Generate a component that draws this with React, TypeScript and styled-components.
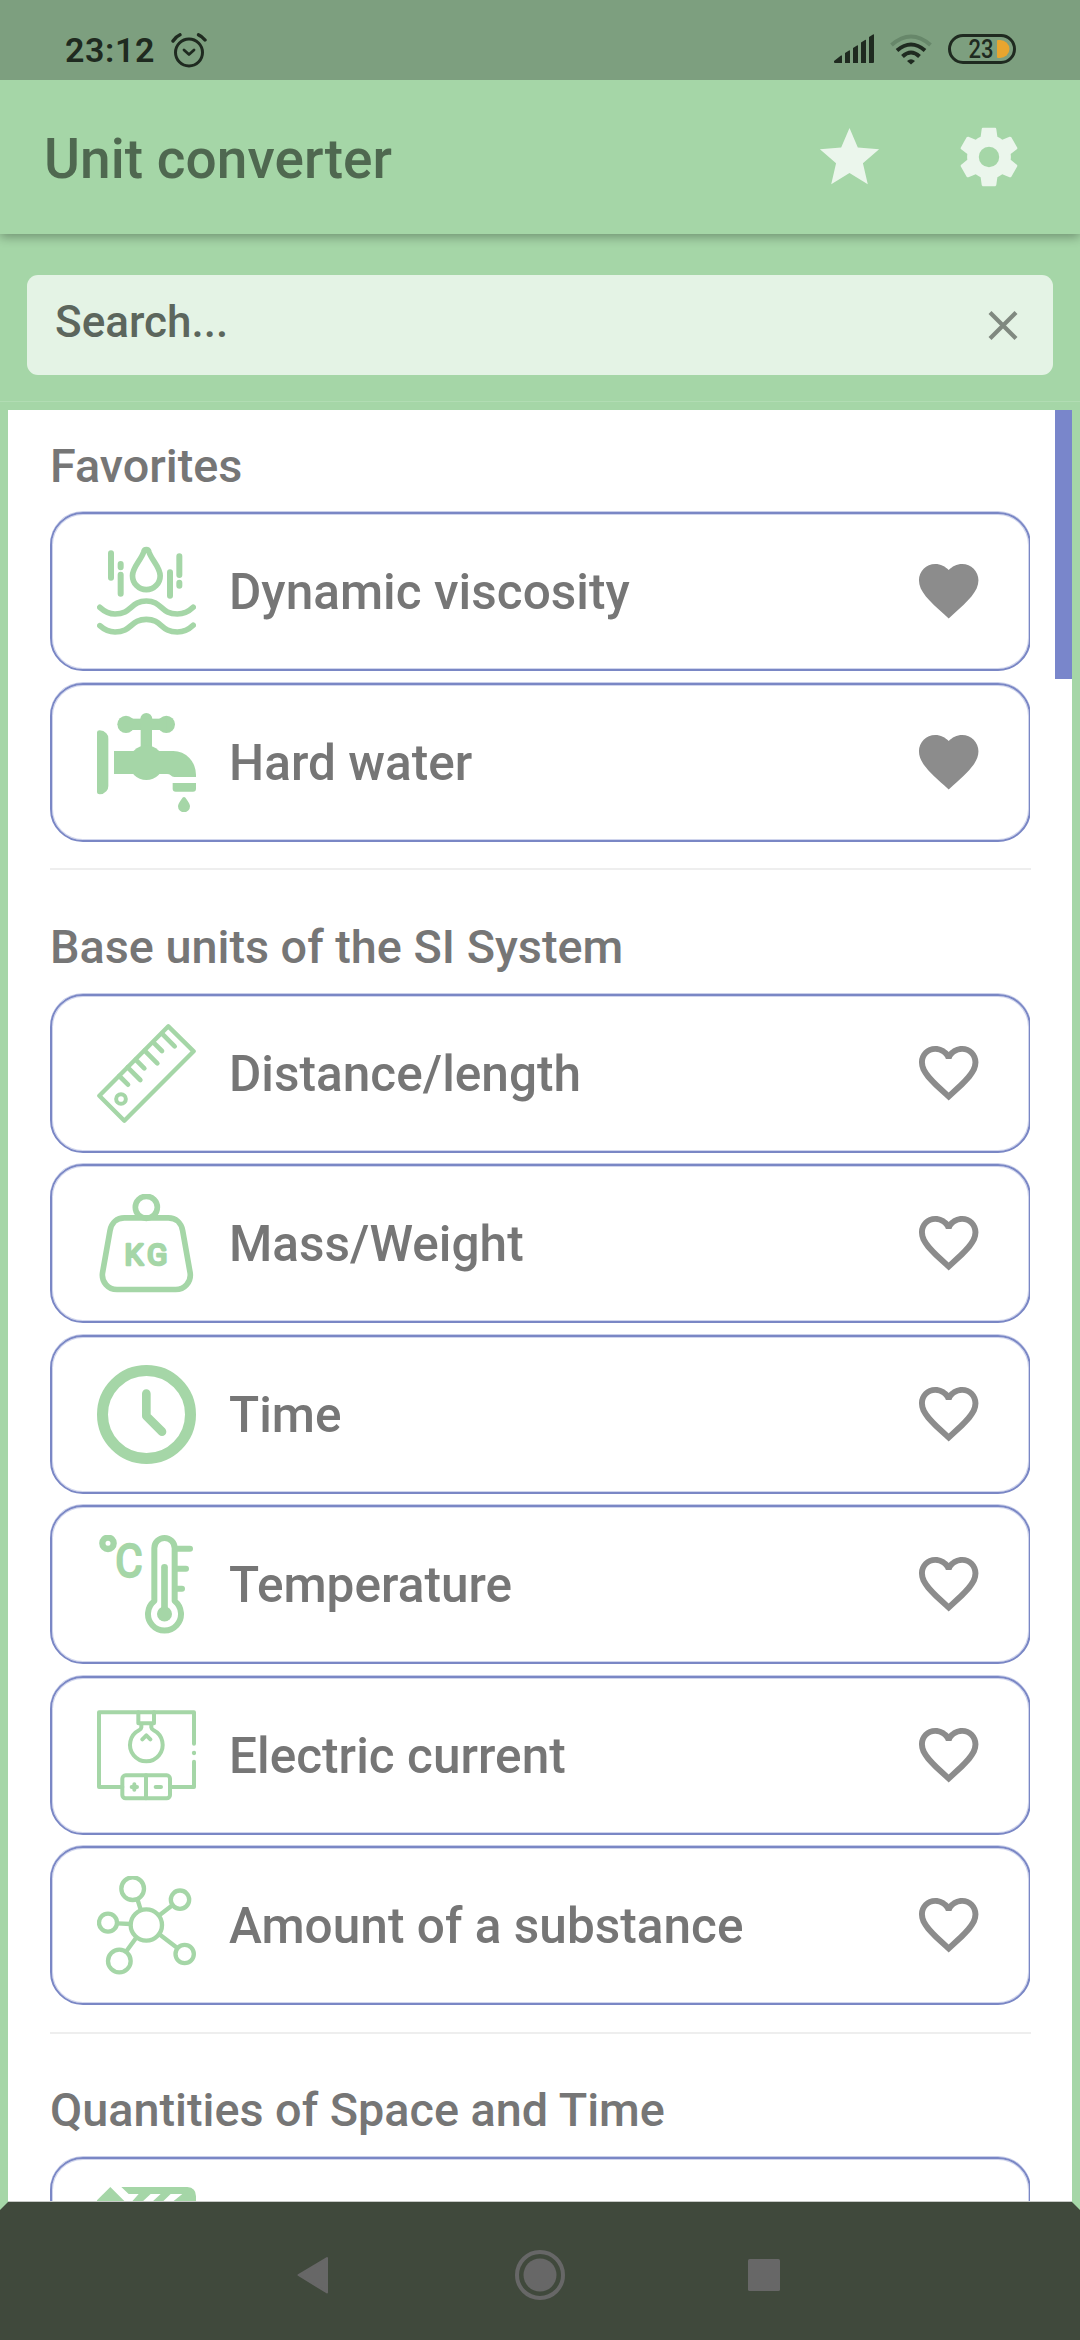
import React from 'react';
import styled, { createGlobalStyle } from 'styled-components';

const green = '#a5d6a7';
const indigo = '#7986cb';
const navColor = '#40493c';
const ink = '#1f2a20';

const GlobalStyle = createGlobalStyle`
  * { box-sizing: border-box; }
  html, body { margin: 0; padding: 0; background: ${green}; }
  body { font-family: Roboto, "Noto Sans", sans-serif; font-weight: 500; overflow: hidden; }
  svg { display: block; flex: none; }
`;

const Screen = styled.div`
  width: 1080px;
  height: 2340px;
  display: flex;
  flex-direction: column;
  background: ${green};
  overflow: hidden;
`;

const StatusBar = styled.header`
  position: relative;
  z-index: 1;
  height: 80px;
  flex: none;
  display: flex;
  align-items: flex-start;
  justify-content: space-between;
  padding: 30px 64px 0 65px;
  background: #7d9f7f;
  color: ${ink};
`;

const StatusGroup = styled.div<{ $height: number }>`
  display: flex;
  align-items: center;
  gap: 16px;
  height: ${(p) => p.$height}px;
`;

const ClockText = styled.span`
  font-size: 34px;
  line-height: 40px;
  font-weight: 600;
  letter-spacing: 0.6px;
`;

const AppBar = styled.div`
  position: relative;
  height: 154px;
  flex: none;
  display: flex;
  align-items: center;
  justify-content: space-between;
  padding: 0 56px 0 44px;
  background: ${green};
  box-shadow: 0 3px 10px rgba(0, 0, 0, 0.32);
`;

const Title = styled.h1`
  margin: 0;
  padding-top: 4px;
  font-size: 55px;
  line-height: 66px;
  font-weight: 500;
  letter-spacing: 0.04px;
  color: #4f6850;
`;

const Actions = styled.div`
  display: flex;
  gap: 69.5px;
  color: #ebf6ec;
`;

const SearchArea = styled.div`
  height: 168px;
  flex: none;
  padding: 41px 27px 0;
  border-bottom: 1px solid #b1dcb3;
`;

const SearchBox = styled.div`
  height: 99.5px;
  display: flex;
  align-items: center;
  justify-content: space-between;
  padding: 0 34px 0 28px;
  border-radius: 11px;
  background: #e4f3e5;
  color: #5c665d;
`;

const SearchText = styled.span`
  padding-bottom: 6px;
  font-size: 44px;
  line-height: 52px;
`;

const Frame = styled.main`
  flex: 1;
  min-height: 0;
  display: flex;
  border: 8px solid ${green};
  border-bottom-color: ${navColor};
`;

const Viewport = styled.div`
  flex: 1;
  display: flex;
  justify-content: space-between;
  background: #fff;
  border-bottom: 1px solid #c7c9c6;
  overflow: hidden;
`;

const List = styled.div`
  width: 1023px;
  padding-left: 42px;
`;

const ScrollTrack = styled.div`
  width: 17px;
`;

const ScrollThumb = styled.div`
  height: 269px;
  background: ${indigo};
`;

const SectionBlock = styled.section<{ $first?: boolean }>`
  padding-top: ${(p) => (p.$first ? 29.7 : 50.7)}px;
`;

const SectionTitle = styled.h2`
  margin: 0 0 20.7px;
  font-size: 46.75px;
  line-height: 52px;
  font-weight: 500;
  color: #767676;
`;

const Cards = styled.div`
  width: 980px;
  display: flex;
  flex-direction: column;
  gap: 11.5px;
  overflow: hidden;
  margin-top: -2px;
  padding-top: 2px;
`;

const Card = styled.div`
  width: 981px;
  height: 159px;
  flex: none;
  display: flex;
  align-items: center;
  padding: 0 45px;
  border: 2px solid #7a87c5;
  border-radius: 33px;
  box-shadow: inset 0 0 0 1px rgba(121, 134, 203, 0.35), 0 -1px 0 0 rgba(121, 134, 203, 0.4);
  color: #767676;
`;

const CardLabel = styled.span`
  flex: 1;
  padding: 1px 0 0 33px;
  font-size: 49.5px;
  line-height: 58px;
  letter-spacing: 0.04px;
  white-space: nowrap;
`;

const HeartSlot = styled.span`
  display: flex;
  margin-top: -2px;
  color: #8c8c8c;
`;

const Divider = styled.hr`
  width: 981px;
  height: 2px;
  margin: 26.5px 0 0;
  border: 0;
  background: #eeeeee;
`;

const NavBar = styled.nav`
  height: 130px;
  flex: none;
  display: grid;
  grid-template-columns: 31px 50px 32px;
  column-gap: 187px;
  align-items: center;
  padding-left: 297px;
  background: ${navColor};
  color: #676767;

  svg:nth-child(2) {
    justify-self: center;
  }
  svg:nth-child(3) {
    margin-left: -4px;
  }
`;

/* ---------- category icons, drawn on a 297 unit square ---------- */

const IconSvg = ({ children }: { children: React.ReactNode }) => (
  <svg
    width="99"
    height="99"
    viewBox="0 0 297 297"
    fill="none"
    stroke={green}
    strokeLinecap="round"
    strokeLinejoin="round"
  >
    {children}
  </svg>
);

const Viscosity = () => (
  <IconSvg>
    <g strokeWidth="18">
      <path d="M42 34V107M71 66V76M71 98V155M219 91V161M247 43V99M247 122V131" />
    </g>
    <g strokeWidth="17">
      <path d="M148 23Q142 23 140 30C132 55 106.500 75 106.500 101A41.500 42 0 0 0 189.500 101C189.500 75 164 55 156 30Q154 23 148 23Z" />
      <path d="M8.500 196C24 210 38 216 54 216C105 216 100 177 148 177C196 177 190 216 241 216C260 216 275 209 288.500 196" />
      <path d="M8.500 251C24 265 38 270 54 270C105 270 100 232 148 232C196 232 190 270 241 270C260 270 275 263 288.500 250" />
    </g>
  </IconSvg>
);

const Faucet = () => (
  <IconSvg>
    <g fill={green} stroke="none">
      <path d="M0 58Q0 52 8 52Q20 52 28 61Q34 67 34 77V219Q34 229 28 235Q20 244 8 244Q0 244 0 238Z" />
      <circle cx="87" cy="34" r="26" />
      <circle cx="208" cy="34" r="26" />
      <circle cx="148" cy="18" r="18" />
      <rect x="87" y="17" width="121" height="34" />
      <rect x="131" y="30" width="34" height="90" />
      <circle cx="148" cy="149" r="52" />
      <path d="M51 114H229A68 72 0 0 1 297 186V192H232Q225 192 221 187Q217 183 210 183H51Z" />
      <path d="M227 210H297V227Q297 236 288 236H236Q227 236 227 227Z" />
      <path d="M261 252Q265 252 268 258Q279 273 279 280A18 18 0 0 1 243 280Q243 273 254 258Q257 252 261 252Z" />
    </g>
  </IconSvg>
);

const Ruler = () => (
  <IconSvg>
    <path strokeWidth="13" strokeLinejoin="round" d="M214 7L290 82L82 290L7 215Z" />
    <path
      strokeWidth="14"
      d="M67 156L93 182M92 130L130 168M116 107L142 133M143 80L181 118M169 55L195 81M195 29L233 67"
    />
    <circle cx="72" cy="225" r="14.500" strokeWidth="12" />
  </IconSvg>
);

const Weight = () => (
  <IconSvg>
    <circle cx="148" cy="40" r="33" strokeWidth="17" />
    <path
      strokeWidth="17"
      d="M82 71.500H214C236 71.500 253 86 257 110L279.500 237C283 264 263 286.500 236 286.500H60C33 286.500 13 264 16.500 237L39 110C43 86 60 71.500 82 71.500Z"
    />
    <text x="82.500 150" y="212" fontSize="90" fontWeight="400" fill={green} strokeWidth="8">
      KG
    </text>
  </IconSvg>
);

const Time = () => (
  <IconSvg>
    <circle cx="148.500" cy="148.500" r="132" strokeWidth="33" />
    <path strokeWidth="26" d="M148 86V153L195 200" />
  </IconSvg>
);

const Temperature = () => (
  <IconSvg>
    <circle cx="33" cy="25" r="17" strokeWidth="19" />
    <text
      x="55"
      y="127"
      fontSize="139"
      fontWeight="400"
      fill={green}
      strokeWidth="7"
      textLength="82"
      lengthAdjust="spacingAndGlyphs"
    >
      C
    </text>
    <path strokeWidth="18" d="M172 39.500A30.500 30.500 0 0 1 233 39.500V198A49.500 49.500 0 1 1 172 198Z" />
    <path strokeWidth="20" d="M202.500 97V237" />
    <circle cx="202.500" cy="237" r="22.500" fill={green} stroke="none" />
    <path strokeWidth="18" d="M234 41H279M234 101H267M234 161H255" />
  </IconSvg>
);

const Current = () => (
  <IconSvg>
    <g strokeWidth="12">
      <path d="M76 243H6V19H291V113M291 167V243H225" />
      <rect x="76" y="208" width="143" height="69" rx="10" />
      <path d="M147 208V277M124 19V52H171V19" />
      <path d="M133 54V64Q132 70 126 73A49 49 0 1 0 170 73Q164 70 163 64V54" />
      <path d="M136 100L148 88L160 100M104 243H120M112 235V251M176 243H192" />
    </g>
    <circle cx="291" cy="141" r="6.500" fill={green} stroke="none" />
  </IconSvg>
);

const Substance = () => (
  <IconSvg>
    <g strokeWidth="13">
      <circle cx="148" cy="147" r="47" />
      <circle cx="107" cy="38" r="34" />
      <circle cx="249" cy="71" r="27.500" />
      <circle cx="33" cy="140" r="27" />
      <circle cx="67" cy="255" r="34" />
      <circle cx="263" cy="234" r="27.500" />
      <path d="M122 72L131 101M226 88L188 117M61 142L100 144M88 226L117 186M240 215L187 175" />
    </g>
  </IconSvg>
);

const Area = () => (
  <IconSvg>
    <g fill={green} stroke="none">
      <path d="M40 0L84 44V80H0V40Z" />
      <path d="M73 0H271Q297 2 297 28V46H225L256 21H221L195 46H164L191 21H161L134 46H103L125 21H95Z" />
    </g>
  </IconSvg>
);

/* ---------- interface icons ---------- */

const HEART =
  'M12,21.35L10.55,20.03C5.4,15.36 2,12.27 2,8.5C2,5.41 4.42,3 7.5,3C9.24,3 10.91,3.81 12,5.08C13.09,3.81 14.76,3 16.5,3C19.58,3 22,5.41 22,8.5C22,12.27 18.6,15.36 13.45,20.03L12,21.35Z';
const HEART_HOLE =
  'M12.1,18.55L12,18.65L11.89,18.55C7.14,14.24 4,11.39 4,8.5C4,6.5 5.5,5 7.5,5C9.04,5 10.54,6 11.07,7.36H12.93C13.46,6 14.96,5 16.5,5C18.5,5 20,6.5 20,8.5C20,11.39 16.86,14.24 12.1,18.55Z';

const Heart = ({ filled }: { filled?: boolean }) => (
  <svg width="71.400" height="71.400" viewBox="0 0 24 24" fill="currentColor">
    <path fillRule="evenodd" d={filled ? HEART : HEART + HEART_HOLE} />
  </svg>
);

const Star = () => (
  <svg width="71" height="71" viewBox="0 0 24 24" fill="currentColor">
    <path d="M12 17.270L18.180 21l-1.640-7.030L22 9.240l-7.190-.61L12 2 9.190 8.630 2 9.240l5.460 4.730L5.820 21z" />
  </svg>
);

const Cog = () => (
  <svg width="70" height="70" viewBox="0 0 24 24" fill="currentColor">
    <path d="M12,15.5A3.5,3.5 0 0,1 8.5,12A3.5,3.5 0 0,1 12,8.5A3.5,3.5 0 0,1 15.5,12A3.5,3.5 0 0,1 12,15.5M19.43,12.97C19.47,12.65 19.5,12.33 19.5,12C19.5,11.67 19.47,11.34 19.43,11L21.54,9.37C21.73,9.22 21.78,8.95 21.66,8.73L19.66,5.27C19.54,5.05 19.27,4.96 19.05,5.05L16.56,6.05C16.04,5.66 15.5,5.32 14.87,5.07L14.5,2.42C14.46,2.18 14.25,2 14,2H10C9.75,2 9.54,2.18 9.5,2.42L9.13,5.07C8.5,5.32 7.96,5.66 7.44,6.05L4.95,5.05C4.73,4.96 4.46,5.05 4.34,5.27L2.34,8.73C2.21,8.95 2.27,9.22 2.46,9.37L4.57,11C4.53,11.34 4.5,11.67 4.5,12C4.5,12.33 4.53,12.65 4.57,12.97L2.46,14.63C2.27,14.78 2.21,15.05 2.34,15.27L4.34,18.73C4.46,18.95 4.73,19.03 4.95,18.95L7.44,17.94C7.96,18.34 8.5,18.68 9.13,18.93L9.5,21.58C9.54,21.82 9.75,22 10,22H14C14.25,22 14.46,21.82 14.5,21.58L14.87,18.93C15.5,18.67 16.04,18.34 16.56,17.94L19.05,18.95C19.27,19.03 19.54,18.95 19.66,18.73L21.66,15.27C21.78,15.05 21.73,14.78 21.54,14.63L19.43,12.97Z" />
  </svg>
);

const Close = () => (
  <svg width="32" height="32" viewBox="0 0 32 32" stroke="#808980" strokeWidth="4.200">
    <path d="M3 3.500L29 29.500M29 3.500L3 29.500" />
  </svg>
);

const Alarm = () => (
  <svg width="36" height="36" viewBox="0 0 36 36" fill="none" stroke={ink} strokeWidth="3" strokeLinecap="round" strokeLinejoin="round">
    <circle cx="18" cy="20.500" r="13.500" />
    <path d="M13 18L18 22.500L23 18" strokeWidth="2.800" />
    <path d="M2 9Q5 4.500 9 2.800M34 8Q31 4.200 27.500 2.800" strokeWidth="3.400" />
  </svg>
);

const Signal = () => (
  <svg width="40" height="30" viewBox="0 0 40 30" fill={ink}>
    <path d="M0 27L7 21.500H8V29H1Q0 29 0 28ZM11 19L15 16.500Q16 16 16 17V29H11ZM19 14L23 11.500Q24 11 24 12V29H19ZM27 8.500L31 6Q32 5.500 32 6.500V29H27ZM35 3L39 .5Q40 0 40 1V28Q40 29 39 29H35Z" />
  </svg>
);

const Wifi = () => (
  <svg width="42" height="31" viewBox="0 0 42 31" fill="none" stroke={ink} strokeWidth="4">
    <path d="M1.500 11Q21 -6 40.500 11" stroke="#67876a" />
    <path d="M7 16.500Q21 4.500 35 16.500M12.500 22.500Q21 14.500 29.500 22.500" />
    <path d="M17 27Q21 23.500 25 27L21 30.500Z" fill={ink} stroke="none" />
  </svg>
);

const Battery = () => (
  <svg width="68" height="30" viewBox="0 0 68 30">
    <rect x="1.500" y="1.500" width="65" height="27" rx="13.500" fill="none" stroke={ink} strokeWidth="3" />
    <text x="20.500" y="24" fontSize="25" fontWeight="500" fill={ink} textLength="25" lengthAdjust="spacingAndGlyphs">
      23
    </text>
    <path d="M49 7Q49 6 50 6H52A9.500 9 0 0 1 52 24H50Q49 24 49 23Z" fill="#e8a52f" />
  </svg>
);

const BackKey = () => (
  <svg width="31" height="38" viewBox="0 0 31 38" fill="currentColor" stroke="currentColor" strokeWidth="2" strokeLinejoin="round">
    <path d="M1.500 19L30 2V36.500Z" />
  </svg>
);

const HomeKey = () => (
  <svg width="50" height="50" viewBox="0 0 50 50" fill="currentColor">
    <circle cx="25" cy="25" r="23" fill="none" stroke="currentColor" strokeWidth="4" />
    <circle cx="25" cy="25" r="16.500" />
  </svg>
);

const RecentKey = () => (
  <svg width="32" height="32" viewBox="0 0 32 32" fill="currentColor">
    <rect width="32" height="32" rx="1.500" />
  </svg>
);

/* ---------- data ---------- */

type Item = { label: string; icon: React.ComponentType; favorite?: boolean };
type Section = { title: string; items: Item[] };

const sections: Section[] = [
  {
    title: 'Favorites',
    items: [
      { label: 'Dynamic viscosity', icon: Viscosity, favorite: true },
      { label: 'Hard water', icon: Faucet, favorite: true },
    ],
  },
  {
    title: 'Base units of the SI System',
    items: [
      { label: 'Distance/length', icon: Ruler },
      { label: 'Mass/Weight', icon: Weight },
      { label: 'Time', icon: Time },
      { label: 'Temperature', icon: Temperature },
      { label: 'Electric current', icon: Current },
      { label: 'Amount of a substance', icon: Substance },
    ],
  },
  {
    title: 'Quantities of Space and Time',
    items: [{ label: '', icon: Area }],
  },
];

export default function App() {
  return (
    <Screen>
      <GlobalStyle />
      <StatusBar>
        <StatusGroup $height={40}>
          <ClockText>23:12</ClockText>
          <Alarm />
        </StatusGroup>
        <StatusGroup $height={38}>
          <Signal />
          <Wifi />
          <Battery />
        </StatusGroup>
      </StatusBar>
      <AppBar>
        <Title>Unit converter</Title>
        <Actions>
          <Star />
          <Cog />
        </Actions>
      </AppBar>
      <SearchArea>
        <SearchBox>
          <SearchText>Search...</SearchText>
          <Close />
        </SearchBox>
      </SearchArea>
      <Frame>
        <Viewport>
          <List>
            {sections.map((section, i) => (
              <SectionBlock key={section.title} $first={i === 0}>
                <SectionTitle>{section.title}</SectionTitle>
                <Cards>
                  {section.items.map(({ label, icon: Icon, favorite }) => (
                    <Card key={label}>
                      <Icon />
                      <CardLabel>{label}</CardLabel>
                      <HeartSlot>
                        <Heart filled={favorite} />
                      </HeartSlot>
                    </Card>
                  ))}
                </Cards>
                <Divider />
              </SectionBlock>
            ))}
          </List>
          <ScrollTrack>
            <ScrollThumb />
          </ScrollTrack>
        </Viewport>
      </Frame>
      <NavBar>
        <BackKey />
        <HomeKey />
        <RecentKey />
      </NavBar>
    </Screen>
  );
}
